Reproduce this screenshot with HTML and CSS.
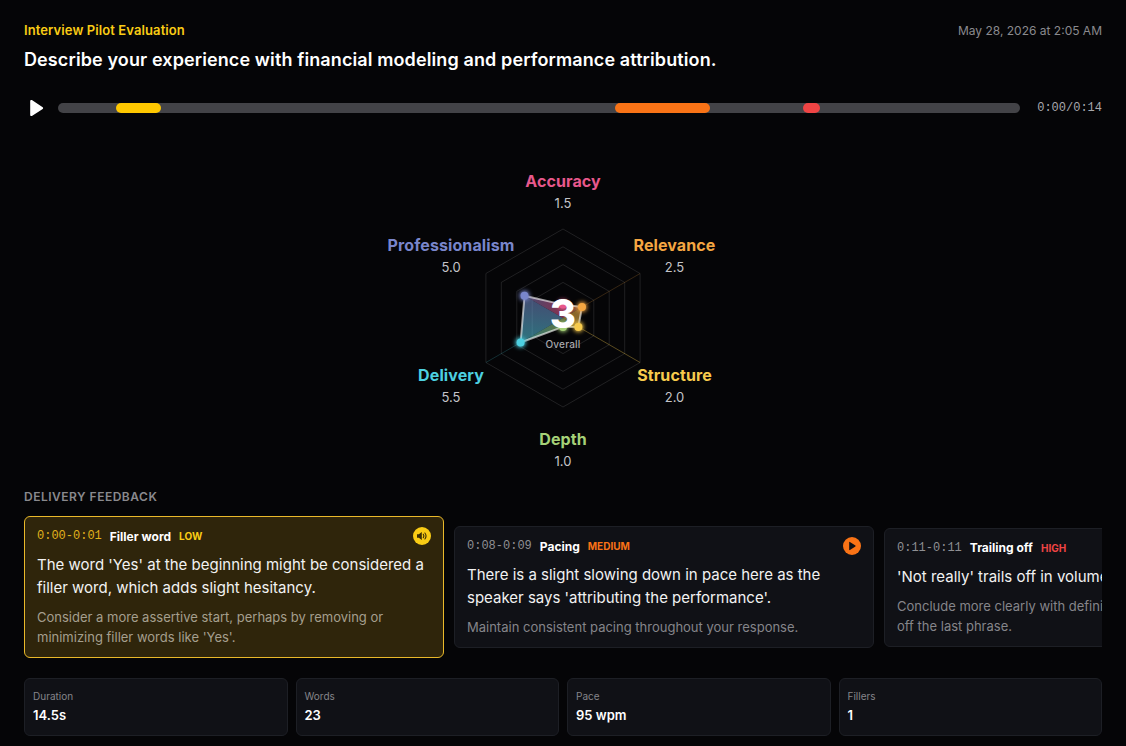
FILE: index.html
```html
<!DOCTYPE html>
<html lang="en">
<head>
  <meta charset="UTF-8">
  <meta name="viewport" content="width=device-width, initial-scale=1.0">
  <title>Interview Pilot Evaluation</title>
  <link rel="stylesheet" href="styles.css">
</head>
<body>
  <div class="page">
    <header class="top">
      <span class="brand">Interview Pilot Evaluation</span>
      <span class="date">May 28, 2026 at 2:05 AM</span>
    </header>
    <h1 class="question">Describe your experience with financial modeling and performance attribution.</h1>

    <div class="player">
      <button class="play-btn" type="button" aria-label="Play">
        <svg width="24" height="24" viewBox="0 0 24 24"><path d="M6.200 5v14c0 .9 1 1.400 1.700 .9l10.800-7c.6-.4.6-1.300 0-1.700L7.900 4.100c-.7-.5-1.700 0-1.700 .9z" fill="#fff"/></svg>
      </button>
      <div class="track">
        <span class="seg seg-low" style="left:6.03%;width:4.68%"></span>
        <span class="seg seg-medium" style="left:57.9%;width:9.88%"></span>
        <span class="seg seg-high" style="left:77.44%;width:1.77%"></span>
      </div>
      <span class="clock">0:00/0:14</span>
    </div>

    <section class="radar">
      <svg class="radar-chart" width="300" height="300" viewBox="-150 -150 300 300">
        <defs>
          <linearGradient id="w1" gradientUnits="userSpaceOnUse" x1="0" y1="-13.400" x2="19" y2="-11"><stop offset="0" stop-color="#e8588c"/><stop offset="1" stop-color="#f5a742"/></linearGradient>
          <linearGradient id="w2" gradientUnits="userSpaceOnUse" x1="19" y1="-11" x2="15.400" y2="8.900"><stop offset="0" stop-color="#f5a742"/><stop offset="1" stop-color="#f7cb4d"/></linearGradient>
          <linearGradient id="w3" gradientUnits="userSpaceOnUse" x1="15.400" y1="8.900" x2="0" y2="8.900"><stop offset="0" stop-color="#f7cb4d"/><stop offset="1" stop-color="#a5d177"/></linearGradient>
          <linearGradient id="w4" gradientUnits="userSpaceOnUse" x1="0" y1="8.900" x2="-42.400" y2="24.500"><stop offset="0" stop-color="#a5d177"/><stop offset="1" stop-color="#4dd0e1"/></linearGradient>
          <linearGradient id="w5" gradientUnits="userSpaceOnUse" x1="-42.400" y1="24.500" x2="-38.500" y2="-22.200"><stop offset="0" stop-color="#4dd0e1"/><stop offset="1" stop-color="#7986cb"/></linearGradient>
          <linearGradient id="w6" gradientUnits="userSpaceOnUse" x1="-38.500" y1="-22.200" x2="0" y2="-13.400"><stop offset="0" stop-color="#7986cb"/><stop offset="1" stop-color="#e8588c"/></linearGradient>
          <filter id="glow" x="-100%" y="-100%" width="300%" height="300%"><feGaussianBlur stdDeviation="2"/></filter>
        </defs>

        <g class="rings">
          <polygon points="0,-89 77.100,-44.500 77.100,44.500 0,89 -77.100,44.500 -77.100,-44.500"/>
          <polygon points="0,-71.200 61.700,-35.600 61.700,35.600 0,71.200 -61.700,35.600 -61.700,-35.600"/>
          <polygon points="0,-53.400 46.200,-26.700 46.200,26.700 0,53.400 -46.200,26.700 -46.200,-26.700"/>
          <polygon points="0,-35.600 30.800,-17.800 30.800,17.800 0,35.600 -30.800,17.800 -30.800,-17.800"/>
        </g>
        <g class="spokes">
          <line x1="19" y1="-11" x2="77.100" y2="-44.500" stroke="#f5a742" stroke-opacity="0.2"/>
          <line x1="15.400" y1="8.900" x2="77.100" y2="44.500" stroke="#f7cb4d" stroke-opacity="0.35"/>
          <line x1="-42.400" y1="24.500" x2="-77.100" y2="44.500" stroke="#4dd0e1" stroke-opacity="0.2"/>
        </g>

        <g class="wedges">
          <polygon points="0,0 0,-13.400 19,-11" fill="url(#w1)"/>
          <polygon points="0,0 19,-11 15.400,8.900" fill="url(#w2)"/>
          <polygon points="0,0 15.400,8.900 0,8.900" fill="url(#w3)"/>
          <polygon points="0,0 0,8.900 -42.400,24.500" fill="url(#w4)"/>
          <polygon points="0,0 -42.400,24.500 -38.500,-22.200" fill="url(#w5)"/>
          <polygon points="0,0 -38.500,-22.200 0,-13.400" fill="url(#w6)"/>
        </g>
        <polygon class="outline" points="0,-13.400 19,-11 15.400,8.900 0,8.900 -42.400,24.500 -38.500,-22.200"/>

        <g filter="url(#glow)">
          <circle cx="0" cy="-13.400" r="5" fill="#e8588c"/>
          <circle cx="19" cy="-11" r="5" fill="#f5a742"/>
          <circle cx="15.400" cy="8.900" r="5" fill="#f7cb4d"/>
          <circle cx="0" cy="8.900" r="5" fill="#a5d177"/>
          <circle cx="-42.400" cy="24.500" r="5" fill="#4dd0e1"/>
          <circle cx="-38.500" cy="-22.200" r="5" fill="#7986cb"/>
        </g>
        <circle cx="0" cy="-13.400" r="4" fill="#e8588c"/>
        <circle cx="19" cy="-11" r="4" fill="#f5a742"/>
        <circle cx="15.400" cy="8.900" r="4" fill="#f7cb4d"/>
        <circle cx="0" cy="8.900" r="4" fill="#a5d177"/>
        <circle cx="-42.400" cy="24.500" r="4" fill="#4dd0e1"/>
        <circle cx="-38.500" cy="-22.200" r="4" fill="#7986cb"/>
      </svg>

      <div class="score">
        <span class="score-num">3</span>
        <span class="score-label">Overall</span>
      </div>

      <div class="axis axis-accuracy"><span class="axis-name">Accuracy</span><span class="axis-val">1.5</span></div>
      <div class="axis axis-relevance"><span class="axis-name">Relevance</span><span class="axis-val">2.5</span></div>
      <div class="axis axis-structure"><span class="axis-name">Structure</span><span class="axis-val">2.0</span></div>
      <div class="axis axis-depth"><span class="axis-name">Depth</span><span class="axis-val">1.0</span></div>
      <div class="axis axis-delivery"><span class="axis-name">Delivery</span><span class="axis-val">5.5</span></div>
      <div class="axis axis-professionalism"><span class="axis-name">Professionalism</span><span class="axis-val">5.0</span></div>
    </section>

    <h2 class="section-title">DELIVERY FEEDBACK</h2>

    <div class="cards">
      <article class="card card-active">
        <div class="card-meta">
          <span class="card-time">0:00-0:01</span>
          <span class="card-type">Filler word</span>
          <span class="card-level level-low">LOW</span>
          <span class="card-icon icon-low">
            <svg width="12" height="12" viewBox="0 0 12 12"><path d="M1 4.300h1.800L5.800 2v8L2.800 7.700H1z" fill="#3a2d05"/><path d="M7.300 4.300c.7.900.7 2.500 0 3.400M8.900 3c1.300 1.700 1.300 4.300 0 6" fill="none" stroke="#3a2d05" stroke-width="1.100" stroke-linecap="round"/></svg>
          </span>
        </div>
        <p class="card-text">The word 'Yes' at the beginning might be considered a filler word, which adds slight hesitancy.</p>
        <p class="card-tip">Consider a more assertive start, perhaps by removing or minimizing filler words like 'Yes'.</p>
      </article>

      <article class="card">
        <div class="card-meta">
          <span class="card-time">0:08-0:09</span>
          <span class="card-type">Pacing</span>
          <span class="card-level level-medium">MEDIUM</span>
          <span class="card-icon icon-medium">
            <svg width="10" height="10" viewBox="0 0 10 10"><path d="M2.200 1.300v7.400c0 .4.400 .6.700 .4l5.500-3.700c.3-.2.300-.6 0-.8L2.900 .9c-.3-.2-.7 0-.7 .4z" fill="#0f1014"/></svg>
          </span>
        </div>
        <p class="card-text">There is a slight slowing down in pace here as the speaker says 'attributing the performance'.</p>
        <p class="card-tip">Maintain consistent pacing throughout your response.</p>
      </article>

      <article class="card">
        <div class="card-meta">
          <span class="card-time">0:11-0:11</span>
          <span class="card-type">Trailing off</span>
          <span class="card-level level-high">HIGH</span>
        </div>
        <p class="card-text">'Not really' trails off in volume at the end.</p>
        <p class="card-tip">Conclude more clearly with definitive statements, not trailing<br>off the last phrase.</p>
      </article>
    </div>

    <div class="stats">
      <div class="stat"><span class="stat-label">Duration</span><span class="stat-value">14.5s</span></div>
      <div class="stat"><span class="stat-label">Words</span><span class="stat-value">23</span></div>
      <div class="stat"><span class="stat-label">Pace</span><span class="stat-value">95 wpm</span></div>
      <div class="stat"><span class="stat-label">Fillers</span><span class="stat-value">1</span></div>
    </div>
  </div>
</body>
</html>
```

FILE: styles.css
```css
* {
  box-sizing: border-box;
}
html, body {
  height: 100%;
}
body {
  margin: 0;
  font-family: Inter, "Liberation Sans", sans-serif;
  background-color: #050507;
  color: #fff;
  overflow: hidden;
}
.page {
  padding: 21px 24px 10px;
}
.top {
  display: flex;
  justify-content: space-between;
  align-items: center;
  height: 18px;
}
.brand {
  font-size: 13px;
  font-weight: 600;
  letter-spacing: 0.1px;
  color: #facc15;
}
.date {
  font-size: 12px;
  color: #8a8a8e;
}
.question {
  margin: 9px 0 0;
  font-size: 18px;
  line-height: 24px;
  font-weight: 600;
  letter-spacing: 0.11px;
}

/* player */
.player {
  display: flex;
  align-items: center;
  margin-top: 24px;
}
.play-btn {
  width: 24px;
  height: 24px;
  padding: 0;
  border: none;
  background: none;
  cursor: pointer;
  flex: none;
}
.play-btn svg {
  display: block;
}
.track {
  position: relative;
  flex: 1;
  height: 10px;
  margin: 0 17px 0 10px;
  border-radius: 5px;
  background-color: #434347;
}
.seg {
  position: absolute;
  top: 0;
  height: 10px;
  border-radius: 5px;
}
.seg-low {
  background-color: #ffc800;
}
.seg-medium {
  background-color: #f97316;
}
.seg-high {
  background-color: #ef4444;
}
.clock {
  font-family: "Liberation Mono", monospace;
  font-size: 12px;
  color: #a8a8ac;
}

/* radar */
.radar {
  position: relative;
  height: 315px;
  margin-top: 45px;
}
.radar-chart {
  position: absolute;
  left: 50%;
  top: 2.500px;
  margin-left: -150px;
}
.rings polygon {
  fill: none;
  stroke: #ffffff;
  stroke-opacity: 0.11;
  stroke-width: 1;
}
.spokes line {
  stroke-width: 1;
}
.wedges polygon {
  opacity: 0.55;
}
.outline {
  fill: none;
  stroke: #ffffff;
  stroke-opacity: 0.6;
  stroke-width: 2;
  stroke-linejoin: round;
}
.score {
  position: absolute;
  left: 50%;
  top: 125px;
  transform: translateX(-50%);
  display: flex;
  flex-direction: column;
  align-items: center;
}
.score-num {
  font-size: 40px;
  line-height: 48px;
  font-weight: 800;
  color: #fff;
}
.score-label {
  font-size: 10px;
  line-height: 12px;
  font-weight: 500;
  letter-spacing: 0.2px;
  color: #a8a8ac;
}
.axis {
  position: absolute;
  display: flex;
  flex-direction: column;
  align-items: center;
  transform: translateX(-50%);
  white-space: nowrap;
}
.axis-name {
  font-size: 16px;
  line-height: 22px;
  font-weight: 700;
  letter-spacing: 0.1px;
}
.axis-val {
  font-size: 13px;
  line-height: 22px;
  color: #c4c4c8;
}
.axis-accuracy {
  left: 50%;
  top: 5px;
}
.axis-accuracy .axis-name {
  color: #e8588c;
}
.axis-relevance {
  left: calc(50% + 111.500px);
  top: 69px;
}
.axis-relevance .axis-name {
  color: #f5a742;
}
.axis-structure {
  left: calc(50% + 111.500px);
  top: 199px;
}
.axis-structure .axis-name {
  color: #f7cb4d;
}
.axis-depth {
  left: 50%;
  top: 263px;
}
.axis-depth .axis-name {
  color: #a5d177;
}
.axis-delivery {
  left: calc(50% - 112px);
  top: 199px;
}
.axis-delivery .axis-name {
  color: #4dd0e1;
}
.axis-professionalism {
  left: calc(50% - 112px);
  top: 69px;
}
.axis-professionalism .axis-name {
  color: #7986cb;
}

.section-title {
  margin: 10px 0 0;
  font-size: 12px;
  line-height: 14px;
  font-weight: 600;
  letter-spacing: 0.5px;
  color: #8a8a8e;
}

/* feedback cards */
.cards {
  display: flex;
  align-items: center;
  gap: 10px;
  margin-top: 12px;
  overflow: hidden;
}
.card {
  flex: none;
  width: 420px;
  padding: 10px 12px;
  border: 1px solid #1d1f25;
  border-radius: 6px;
  background-color: #101116;
}
.card-active {
  border-color: #eab92a;
  background-color: #2f250b;
}
.card-meta {
  display: flex;
  align-items: center;
  gap: 8px;
  height: 18px;
}
.card-time {
  font-family: "Liberation Mono", monospace;
  font-size: 12px;
  color: #8f8f93;
}
.card-active .card-time {
  color: #e0b21c;
}
.card-type {
  font-size: 12px;
  font-weight: 700;
  color: #fff;
}
.card-level {
  font-size: 10px;
  font-weight: 700;
}
.level-low {
  color: #facc15;
}
.level-medium {
  color: #f97316;
}
.level-high {
  color: #ef4444;
}
.card-icon {
  display: flex;
  align-items: center;
  justify-content: center;
  width: 18px;
  height: 18px;
  margin-left: auto;
  border-radius: 50%;
}
.icon-low {
  background-color: #facc15;
}
.icon-medium {
  background-color: #f97316;
}
.card-text {
  margin: 8px 0 0;
  font-size: 15px;
  line-height: 23px;
  color: #f2f2f2;
}
.card-tip {
  margin: 8px 0 0;
  font-size: 13px;
  line-height: 20px;
  color: #85858a;
}
.card-active .card-tip {
  color: #a59f8e;
}

/* stats */
.stats {
  display: grid;
  grid-template-columns: repeat(4, 1fr);
  gap: 8px;
  margin-top: 20px;
}
.stat {
  display: flex;
  flex-direction: column;
  height: 58px;
  padding: 10px 8px;
  border: 1px solid #1d1f25;
  border-radius: 6px;
  background-color: #101116;
}
.stat-label {
  font-size: 10px;
  line-height: 15px;
  color: #85858a;
}
.stat-value {
  font-size: 13px;
  line-height: 23px;
  font-weight: 600;
  color: #fff;
}
```
